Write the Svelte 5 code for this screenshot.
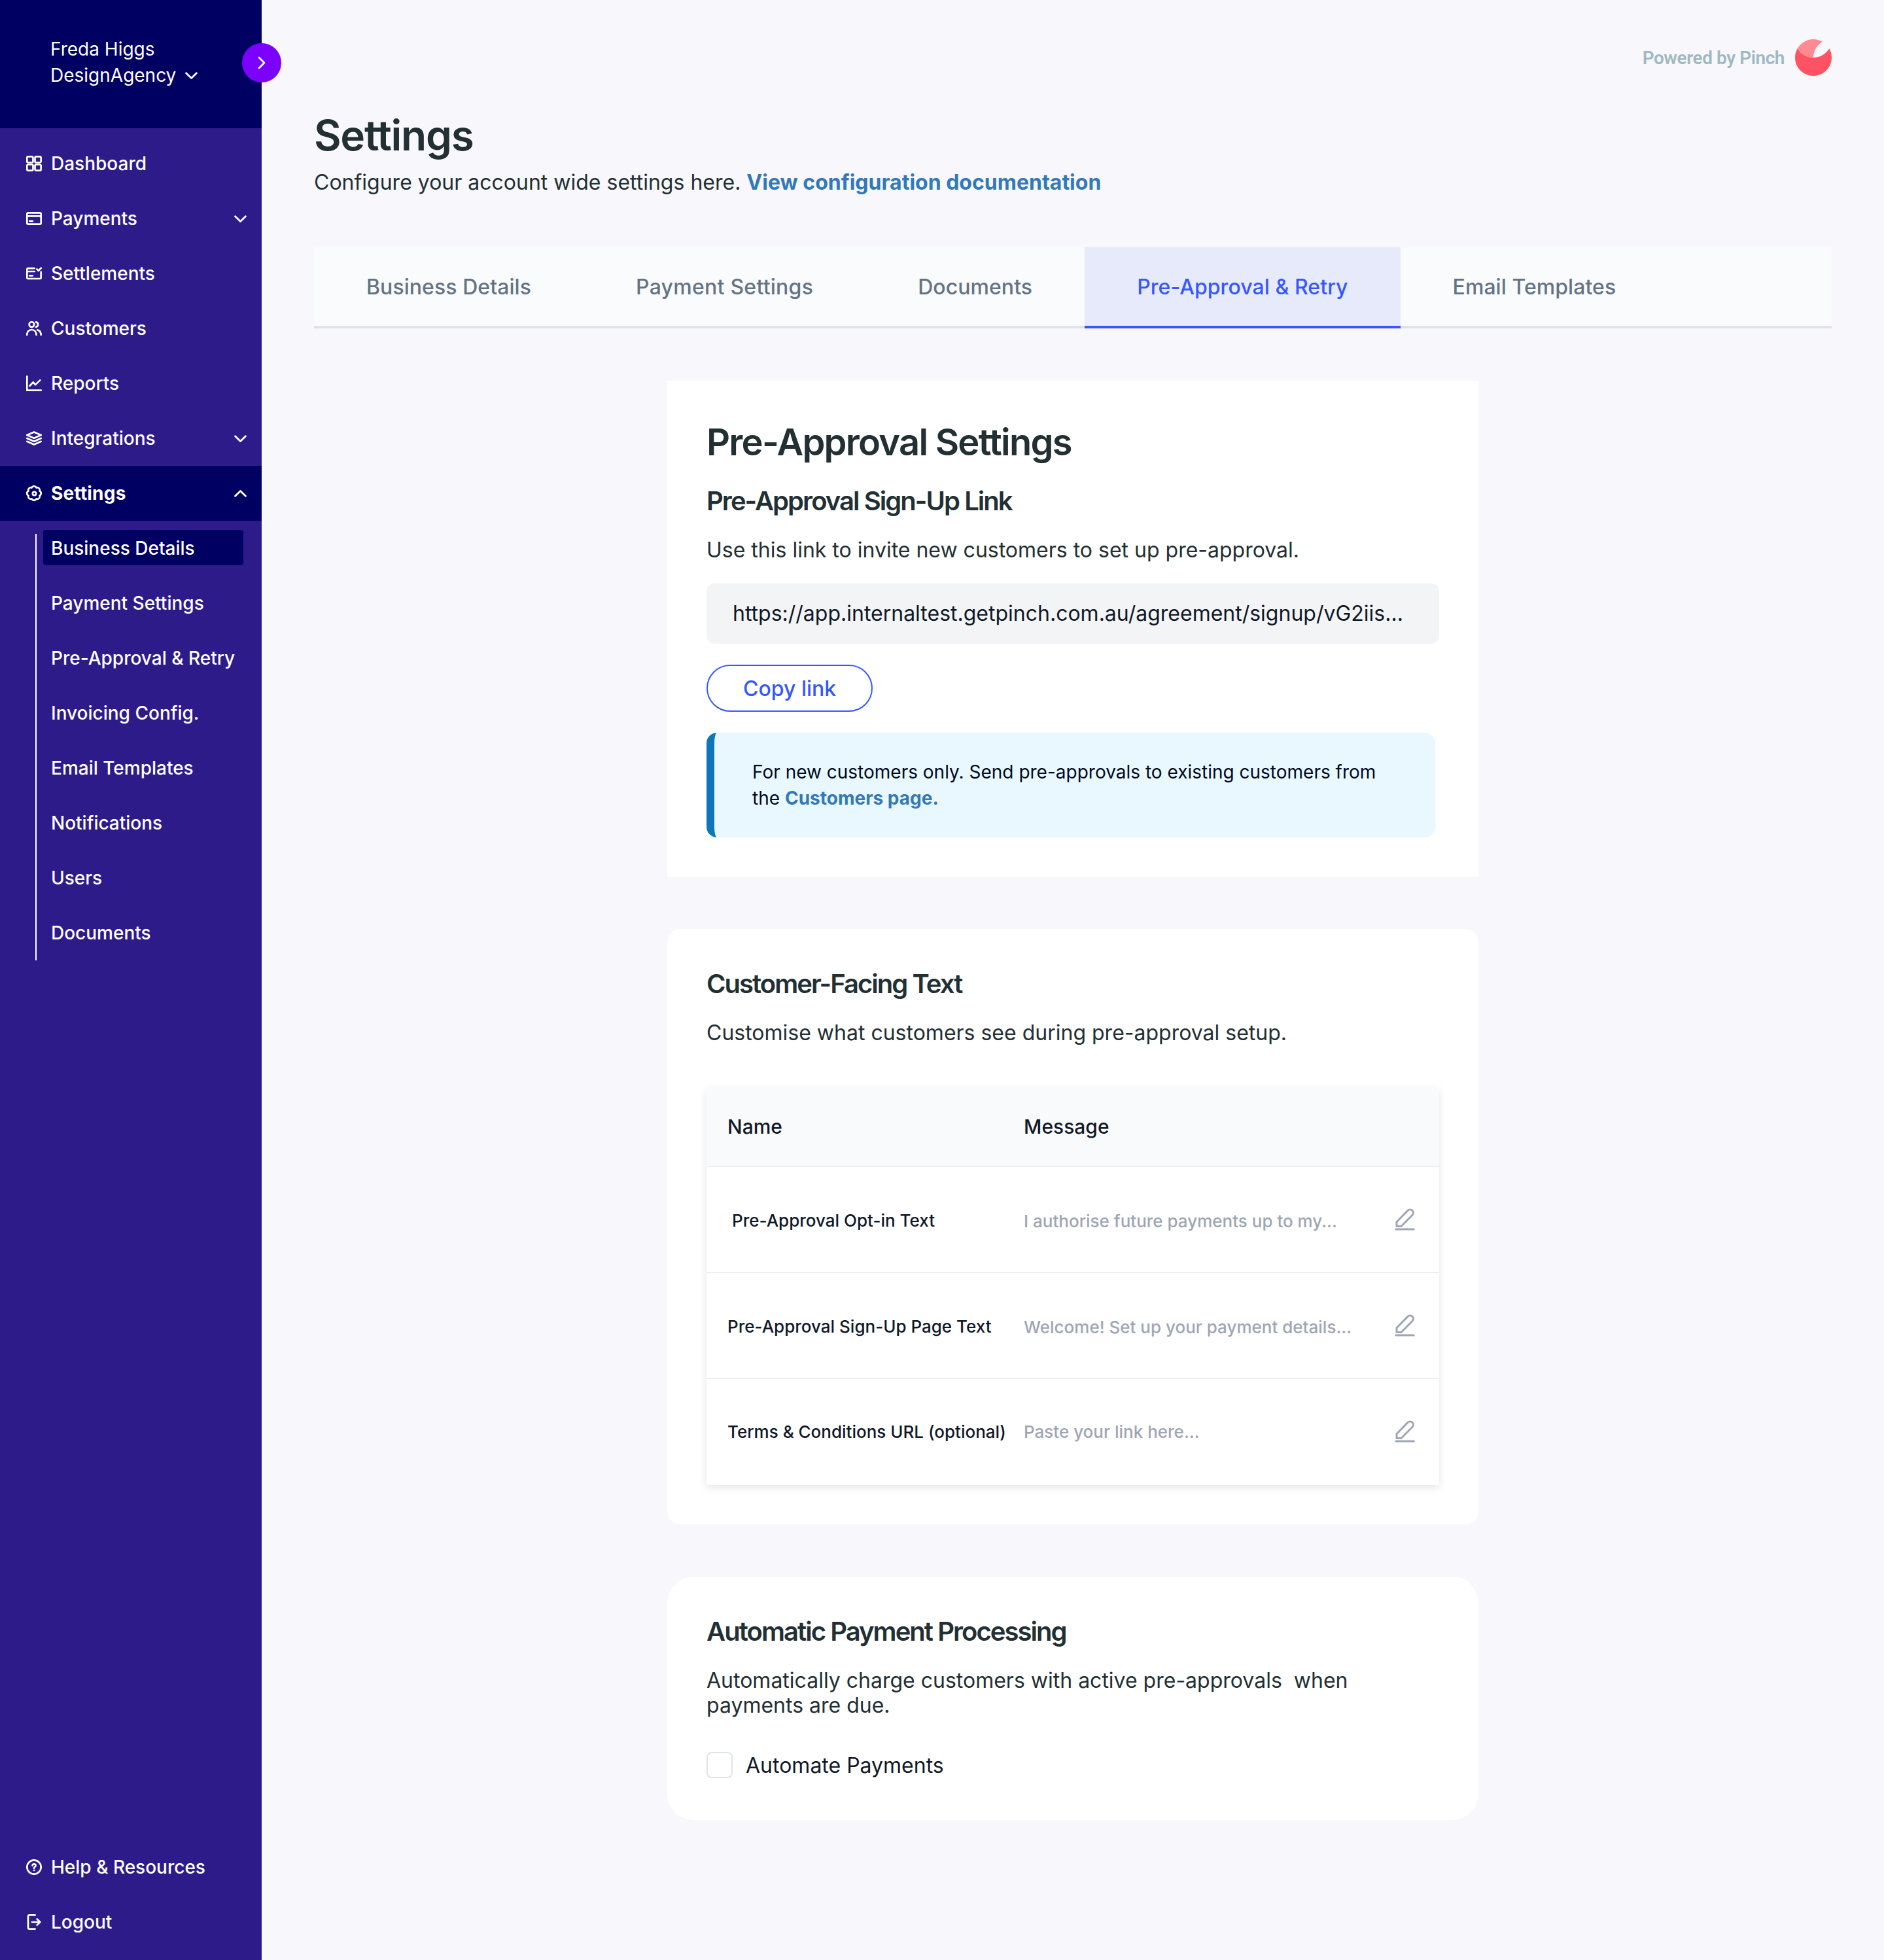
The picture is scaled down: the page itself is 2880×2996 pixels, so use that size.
<script>
    const chevron = 'M1.5 1.5L9 8.7L16.5 1.5';

    const icons = {
        dashboard: ['M3.2 1.3h5.4q1.9 0 1.9 1.9v5.4q0 1.9-1.9 1.9H3.2q-1.9 0-1.9-1.9V3.2q0-1.9 1.9-1.9z', 'M15.4 1.3h5.4q1.9 0 1.9 1.9v5.4q0 1.9-1.9 1.9h-5.4q-1.9 0-1.9-1.9V3.2q0-1.9 1.9-1.9z', 'M3.2 13.5h5.4q1.9 0 1.9 1.9v5.4q0 1.9-1.9 1.9H3.2q-1.9 0-1.9-1.9v-5.4q0-1.9 1.9-1.9z', 'M15.4 13.5h5.4q1.9 0 1.9 1.9v5.4q0 1.9-1.9 1.9h-5.4q-1.9 0-1.9-1.9v-5.4q0-1.9 1.9-1.9z'],
        payments: ['M3 3.3h18q1.7 0 1.7 1.7v14q0 1.7-1.7 1.7H3q-1.7 0-1.7-1.7V5q0-1.7 1.7-1.7z', 'M1.3 8.4h21.4', 'M5.2 15.9h4.6'],
        settlements: ['M12.7 4.2H3q-1.7 0-1.7 1.7v12.4q0 1.7 1.7 1.7h18q1.7 0 1.7-1.7V9.6', 'M1.3 9h11.6', 'M5.2 15.3h4.6', 'M16.4 5.4l2.4 2.5l4-4.2'],
        customers: ['M8.4 2.2a3.8 3.8 0 1 1 0 7.6a3.8 3.8 0 0 1 0-7.6z', 'M1.3 21.8c0-4.6 2.8-7.8 7-7.8s7 3.2 7.3 7.8', 'M14.9 2.3a3.8 3.8 0 0 1 0 7.5', 'M17.2 14.4c3.4.8 5.3 3.6 5.5 7.4'],
        reports: ['M1.3 1.3v21.4h21.4', 'M5.4 15.8l5.3-5.6l3.3 3.9l7.3-7'],
        integrations: ['M12 2.4l10.7 4.7L12 11.8L1.3 7.1z', 'M1.3 12L12 16.8L22.7 12', 'M1.3 16.8L12 21.5l10.7-4.7'],
        settings: ['M8.48 3.5A3.84 3.84 0 0 1 15.52 3.5A3.84 3.84 0 0 1 20.5 8.48A3.84 3.84 0 0 1 20.5 15.52A3.84 3.84 0 0 1 15.52 20.5A3.84 3.84 0 0 1 8.48 20.5A3.84 3.84 0 0 1 3.5 15.52A3.84 3.84 0 0 1 3.5 8.48A3.84 3.84 0 0 1 8.48 3.5z', 'M12.5 9.8a2.7 2.7 0 1 1 0 5.4a2.7 2.7 0 0 1 0-5.4z'],
        help: ['M12 1.3a10.7 10.7 0 1 1 0 21.4a10.7 10.7 0 0 1 0-21.4z', 'M9.6 9.6c0-3 5-3 5 0c0 1.8-2.5 1.9-2.5 4', 'M12.1 16.9v.1'],
        logout: ['M13.6 1.4H5q-2 0-2 2v17.2q0 2 2 2h8.6', 'M9 12h12', 'M16.6 7.4l4.6 4.6l-4.6 4.6']
    };

    const nav = [
        { label: 'Dashboard', icon: 'dashboard' },
        { label: 'Payments', icon: 'payments', expandable: true },
        { label: 'Settlements', icon: 'settlements' },
        { label: 'Customers', icon: 'customers' },
        { label: 'Reports', icon: 'reports' },
        { label: 'Integrations', icon: 'integrations', expandable: true },
        { label: 'Settings', icon: 'settings', expandable: true, open: true }
    ];

    const subNav = ['Business Details', 'Payment Settings', 'Pre-Approval & Retry', 'Invoicing Config.', 'Email Templates', 'Notifications', 'Users', 'Documents'];

    const footerNav = [
        { label: 'Help & Resources', icon: 'help' },
        { label: 'Logout', icon: 'logout' }
    ];

    const tabs = ['Business Details', 'Payment Settings', 'Documents', 'Pre-Approval & Retry', 'Email Templates'];

    const rows = [
        { name: 'Pre-Approval Opt-in Text', message: 'I authorise future payments up to my...', inset: true },
        { name: 'Pre-Approval Sign-Up Page Text', message: 'Welcome! Set up your payment details...' },
        { name: 'Terms & Conditions URL (optional)', message: 'Paste your link here...' }
    ];

    let selectedSub = $state('Business Details');
    let selectedTab = $state('Pre-Approval & Retry');
    let automate = $state(false);
</script>

{#snippet navItem(item)}
    <button class="nav-item" class:nav-open={item.open}>
        <svg class="nav-icon" viewBox="0 0 24 24">
            {#each icons[item.icon] as d}
                <path {d}/>
            {/each}
        </svg>
        <span class="nav-label">{item.label}</span>
        {#if item.expandable}
            <svg class="chevron" class:flipped={item.open} viewBox="0 0 18 10"><path d={chevron}/></svg>
        {/if}
    </button>
{/snippet}

<div class="page">
    <aside class="sidebar">
        <div class="account">
            <div>Freda Higgs</div>
            <div class="agency">
                DesignAgency
                <svg class="chevron" viewBox="0 0 18 10"><path d={chevron}/></svg>
            </div>
            <button class="collapse" aria-label="Expand">
                <svg viewBox="0 0 12 20"><path d="M2 2L10 10L2 18"/></svg>
            </button>
        </div>

        <nav>
            {#each nav as item}
                {@render navItem(item)}
            {/each}
            <div class="sub-nav">
                {#each subNav as label}
                    <button class="sub-item" class:sub-selected={label == selectedSub} onclick={() => selectedSub = label}>{label}</button>
                {/each}
            </div>
        </nav>

        <div class="nav-footer">
            {#each footerNav as item}
                {@render navItem(item)}
            {/each}
        </div>
    </aside>

    <main>
        <div class="powered">
            Powered by Pinch
            <svg viewBox="0 0 56 56">
                <path fill="#ff5263" d="M3.75 14A28 28 0 1 0 52.25 14A28 28 0 0 1 3.75 14z"/>
                <path fill="#ff8a92" d="M3.75 14A28 28 0 0 1 42 3.75A28 28 0 0 0 28 28A28 28 0 0 1 3.75 14z"/>
            </svg>
        </div>

        <h1>Settings</h1>
        <p class="intro">Configure your account wide settings here. <a href="#docs">View configuration documentation</a></p>

        <div class="tabs">
            {#each tabs as tab}
                <button class="tab" class:tab-selected={tab == selectedTab} onclick={() => selectedTab = tab}>{tab}</button>
            {/each}
        </div>

        <section class="card square">
            <h2>Pre-Approval Settings</h2>
            <h3>Pre-Approval Sign-Up Link</h3>
            <p>Use this link to invite new customers to set up pre-approval.</p>
            <div class="link-field">https://app.internaltest.getpinch.com.au/agreement/signup/vG2iis...</div>
            <button class="copy">Copy link</button>
            <div class="notice">
                For new customers only. Send pre-approvals to existing customers from the <a href="#customers">Customers page.</a>
            </div>
        </section>

        <section class="card">
            <h3>Customer-Facing Text</h3>
            <p>Customise what customers see during pre-approval setup.</p>
            <div class="table">
                <div class="table-row table-head">
                    <span>Name</span>
                    <span>Message</span>
                </div>
                {#each rows as row}
                    <div class="table-row">
                        <span class="name" class:inset={row.inset}>{row.name}</span>
                        <span class="message">{row.message}</span>
                        <button class="edit" aria-label="Edit">
                            <svg viewBox="0 0 32 34">
                                <path d="M3 27.5V20.8L20 3.4A4.9 4.9 0 0 1 27 10.3L10 27.5z"/>
                                <path d="M1.9 32H29.3"/>
                            </svg>
                        </button>
                    </div>
                {/each}
            </div>
        </section>

        <section class="card round">
            <h3>Automatic Payment Processing</h3>
            <p>Automatically charge customers with active pre-approvals&nbsp; when payments are due.</p>
            <label class="check">
                <input type="checkbox" bind:checked={automate}>
                Automate Payments
            </label>
        </section>
    </main>
</div>

<style>
    :global(body) {
        background: #f8f8fc;
    }

    .page {
        display: flex;
        height: 2996px;
        font-family: Inter, "Liberation Sans", sans-serif;
        font-size: 32px;
        color: #222f33;
    }

    button {
        padding: 0;
        border: 0;
        background: none;
        font: inherit;
        color: inherit;
        text-align: left;
        cursor: pointer;
    }

    a {
        color: #3279b9;
        font-weight: 700;
        text-decoration: none;
    }

    svg {
        display: block;
        flex: none;
    }

    .sidebar {
        display: flex;
        flex-direction: column;
        flex: none;
        width: 400px;
        background: #2e1b8a;
        color: #fff;
        font-size: 28px;
    }

    .sidebar path {
        fill: none;
        stroke: #fff;
        stroke-width: 2.7;
        stroke-linecap: round;
        stroke-linejoin: round;
    }

    .account {
        position: relative;
        height: 196px;
        padding: 55px 0 0 77px;
        margin-bottom: 12px;
        box-sizing: border-box;
        background: #000062;
        line-height: 40px;
    }

    .agency {
        display: flex;
        align-items: center;
        gap: 14px;
    }

    .collapse {
        position: absolute;
        top: 66px;
        right: -30px;
        display: flex;
        align-items: center;
        justify-content: center;
        width: 60px;
        height: 60px;
        border-radius: 50%;
        background: #7b00ff;
    }

    .collapse svg {
        width: 12px;
        height: 20px;
    }

    .chevron {
        width: 19px;
        height: 11px;
    }

    .flipped {
        transform: rotate(180deg);
    }

    .nav-item {
        display: flex;
        align-items: center;
        gap: 14px;
        width: 100%;
        height: 84px;
        padding: 0 23px 0 40px;
        font-weight: 500;
    }

    .nav-open {
        background: #000062;
        font-weight: 700;
        letter-spacing: 0.2px;
    }

    .nav-icon {
        width: 24px;
        height: 24px;
    }

    .nav-label {
        flex: 1;
    }

    .sub-nav {
        display: flex;
        flex-direction: column;
        gap: 30px;
        height: 652px;
        box-sizing: border-box;
        margin: 20px 28px 0 54px;
        padding-left: 10px;
        border-left: 2px solid #fff;
    }

    .sub-item {
        flex: none;
        height: 54px;
        padding: 1px 0 0 12px;
        border-radius: 4px;
        font-weight: 500;
    }

    .sub-item:first-child {
        margin-top: -6px;
    }

    .sub-selected {
        background: #000062;
    }

    .nav-footer {
        margin-top: auto;
        padding-bottom: 16px;
    }

    main {
        display: flex;
        flex-direction: column;
        flex: 1;
        padding: 60px 80px 0;
    }

    .powered {
        display: flex;
        align-items: center;
        justify-content: flex-end;
        gap: 16px;
        height: 56px;
        font-family: Roboto, sans-serif;
        font-size: 28px;
        font-weight: 600;
        letter-spacing: -0.45px;
        color: #a1b8c2;
    }

    .powered svg {
        width: 56px;
        height: 56px;
    }

    h1, h2, h3, p {
        margin: 0;
    }

    h1 {
        margin-top: 51px;
        font-size: 64px;
        font-weight: 600;
        line-height: 80px;
        letter-spacing: -1.28px;
    }

    h2 {
        font-size: 56px;
        font-weight: 600;
        line-height: 68px;
        letter-spacing: -1.75px;
    }

    h3 {
        font-size: 40px;
        font-weight: 600;
        line-height: 48px;
        letter-spacing: -1.95px;
    }

    p {
        line-height: 38px;
    }

    .intro {
        margin-top: 13px;
    }

    .tabs {
        display: flex;
        height: 124px;
        margin: 80px 0;
        box-sizing: border-box;
        background: #fafbfd;
        box-shadow: inset 0 -4px #dfe3e9;
    }

    .tab {
        padding: 0 80px 4px;
        font-weight: 500;
        letter-spacing: 0.06px;
        color: #647383;
    }

    .tab:nth-child(2) {
        letter-spacing: 0.25px;
    }

    .tab-selected {
        background: #e7eafb;
        box-shadow: inset 0 -4px #3657ff;
        color: #3657ff;
    }

    .card {
        display: flex;
        flex-direction: column;
        align-items: flex-start;
        gap: 32px;
        align-self: center;
        width: 1240px;
        box-sizing: border-box;
        padding: 60px;
        margin-bottom: 80px;
        border-radius: 20px;
        background: #fff;
    }

    .square {
        border-radius: 0;
    }

    .round {
        padding-bottom: 64px;
        border-radius: 40px;
    }

    .link-field {
        width: 1120px;
        box-sizing: border-box;
        padding: 0 40px;
        border-radius: 12px;
        background: #f3f4f6;
        line-height: 92px;
        color: #101828;
    }

    .copy {
        height: 72px;
        padding: 0 54px;
        border: 2px solid #3657ff;
        border-radius: 36px;
        font-weight: 500;
        color: #3657ff;
    }

    .notice {
        width: 1114px;
        box-sizing: border-box;
        padding: 40px 60px 40px 58px;
        border-left: 12px solid #0c78bb;
        border-radius: 16px;
        background: #e9f8ff;
        font-size: 28px;
        line-height: 40px;
        color: #000a1e;
    }

    .table {
        width: 1120px;
        margin-top: 32px;
        box-shadow: 0 4px 12px rgba(0, 0, 0, 0.1);
    }

    .table-row {
        display: grid;
        grid-template-columns: 453px 1fr 32px;
        align-items: center;
        height: 162px;
        padding: 0 36px 0 32px;
        box-sizing: border-box;
        border-bottom: 2px solid #edeef0;
        font-size: 26px;
        font-weight: 500;
        color: #101828;
    }

    .table-row:last-child {
        border-bottom-color: transparent;
    }

    .table-head {
        height: 122px;
        background: #f9fafc;
        font-size: 30px;
    }

    .name {
        padding-top: 2px;
        white-space: nowrap;
    }

    .inset {
        padding-left: 7px;
    }

    .message {
        padding-top: 4px;
        color: #9ea5b4;
    }

    .table-row:last-child span {
        padding-top: 0;
    }

    .edit svg {
        width: 32px;
        height: 34px;
    }

    .edit path {
        fill: none;
        stroke: #9ea5b4;
        stroke-width: 3;
        stroke-linecap: round;
        stroke-linejoin: round;
    }

    .check {
        display: flex;
        align-items: center;
        gap: 20px;
        height: 40px;
        margin-top: 20px;
        color: #101828;
    }

    .check input {
        appearance: none;
        width: 40px;
        height: 40px;
        margin: 0;
        border: 2px solid #dfe3e9;
        border-radius: 8px;
    }
</style>
